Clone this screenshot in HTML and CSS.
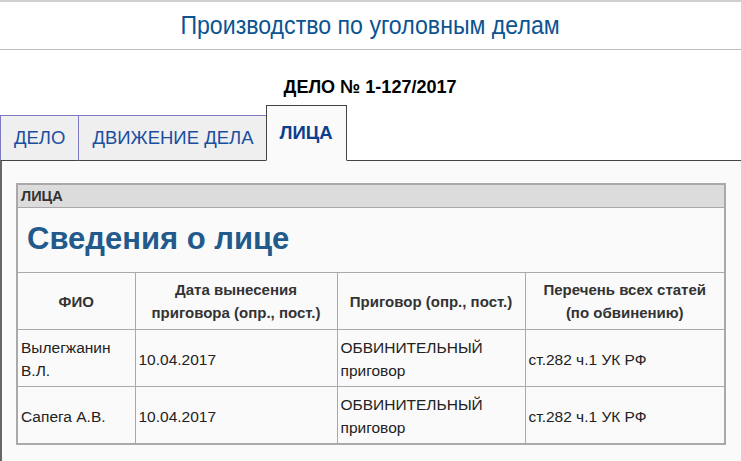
FILE: index.html
```html
<!DOCTYPE html>
<html lang="ru">
<head>
<meta charset="utf-8">
<title>Производство по уголовным делам</title>
<link rel="stylesheet" href="styles.css">
</head>
<body>
<header class="site-header">
  <h1 class="site-title">Производство по уголовным делам</h1>
</header>
<h2 class="case-title"><span class="case-text">ДЕЛО № 1-127/2017</span></h2>
<nav class="tabs">
  <a class="tab">ДЕЛО</a>
  <a class="tab">ДВИЖЕНИЕ ДЕЛА</a>
  <a class="tab tab-active">ЛИЦА</a>
  <span class="tab-fill"></span>
</nav>
<main class="content">
  <table class="panel">
    <colgroup>
      <col class="c1"><col class="c2"><col class="c3"><col class="c4">
    </colgroup>
    <tr><th class="panel-head" colspan="4">ЛИЦА</th></tr>
    <tr><td class="panel-title" colspan="4">Сведения о лице</td></tr>
    <tr class="head-row">
      <th>ФИО</th>
      <th>Дата вынесения приговора (опр., пост.)</th>
      <th>Приговор (опр., пост.)</th>
      <th>Перечень всех статей (по обвинению)</th>
    </tr>
    <tr class="data-row">
      <td>Вылегжанин В.Л.</td>
      <td>10.04.2017</td>
      <td>ОБВИНИТЕЛЬНЫЙ приговор</td>
      <td>ст.282 ч.1 УК РФ</td>
    </tr>
    <tr class="data-row">
      <td>Сапега А.В.</td>
      <td>10.04.2017</td>
      <td>ОБВИНИТЕЛЬНЫЙ приговор</td>
      <td>ст.282 ч.1 УК РФ</td>
    </tr>
  </table>
</main>
</body>
</html>
```
FILE: styles.css
```css
html, body {
  margin: 0;
  padding: 0;
  background: #fff;
  font-family: "Liberation Sans", Arial, sans-serif;
  color: #222;
}
.site-header {
  border-top: 2px solid #d0d0d0;
  border-bottom: 1px solid #bdbdbd;
  height: 47px;
  display: flex;
  align-items: center;
  justify-content: center;
}
.site-title {
  margin: 0;
  font-weight: normal;
  font-size: 25px;
  color: #0b5391;
  transform: scaleX(0.925);
  padding-bottom: 0;
  white-space: nowrap;
}
.case-title {
  margin: 0;
  height: 55px;
  display: flex;
  align-items: flex-end;
  justify-content: center;
  padding-bottom: 7px;
  box-sizing: border-box;
  font-weight: bold;
  font-size: 19px;
  color: #000;
}
.case-text {
  display: inline-block;
  transform: scaleX(0.95);
  white-space: nowrap;
}
.tabs {
  display: flex;
  align-items: flex-end;
  height: 56px;
}
.tab {
  height: 44px;
  border: 1px solid #7b79c2;
  border-bottom: 1px solid #444;
  background: #efefef;
  display: flex;
  align-items: center;
  padding: 0 13px;
  font-size: 18.5px;
  color: #1b4ea0;
  margin-right: -1px;
  white-space: nowrap;
}
.tab-active {
  height: 54px;
  border: 1px solid #444;
  border-bottom: 1px solid #fafafa;
  background: #fafafa;
  font-weight: bold;
  color: #0d3e8e;
  padding: 0 13px 0 12px;
  margin-right: 0;
}
.tab-fill {
  flex: 1;
  border-bottom: 1px solid #444;
}
.content {
  background: #fafafa;
  border-left: 2px solid #666;
  padding: 22px 15px 20px 14px;
}
.panel {
  width: 100%;
  table-layout: fixed;
  border-collapse: collapse;
  border: 2px solid #a9a9a9;
  font-size: 15px;
}
.c1 { width: 118px; }
.c2 { width: 202px; }
.c3 { width: 188px; }
.panel td, .panel th {
  border: 1px solid #a9a9a9;
}
.panel-head {
  background: #dcdcdc;
  text-align: left;
  font-size: 14.5px;
  font-weight: bold;
  color: #333;
  height: 22px;
  padding: 0 3px;
}
.panel-title {
  height: 62px;
  padding: 0 0 2px 9px;
  font-size: 31px;
  font-weight: bold;
  color: #225a8c;
}
.head-row th {
  font-size: 15px;
  font-weight: bold;
  color: #333;
  text-align: center;
  height: 56px;
  line-height: 23px;
  padding: 0 6px;
}
.data-row td {
  height: 54px;
  line-height: 23px;
  padding: 2px 3px 0 3px;
  font-size: 15.5px;
  color: #222;
  vertical-align: middle;
}
```
